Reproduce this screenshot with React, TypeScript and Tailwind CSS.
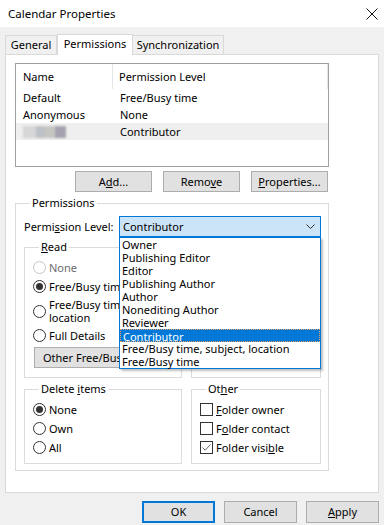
import React from "react";

const Radio = ({ checked, disabled }: { checked?: boolean; disabled?: boolean }) => (
  <span
    className={`flex h-[13px] w-[13px] shrink-0 items-center justify-center rounded-full border bg-white ${
      disabled ? "border-[#c4c4c4]" : "border-[#333333]"
    }`}
  >
    {checked && <span className="h-[7px] w-[7px] rounded-full bg-[#333333]" />}
  </span>
);

const Check = ({ checked }: { checked?: boolean }) => (
  <span className="flex h-[13px] w-[13px] shrink-0 items-center justify-center border border-[#333333] bg-white">
    {checked && (
      <svg width="11" height="11" viewBox="0 0 11 11">
        <path d="M1.5 5.5 L4.2 8.2 L9.5 2.5" stroke="#666" strokeWidth="1" fill="none" />
      </svg>
    )}
  </span>
);

const Btn = ({ children, className = "" }: { children: React.ReactNode; className?: string }) => (
  <div
    className={`flex h-[21px] items-center justify-center border border-[#adadad] bg-[#e1e1e1] ${className}`}
  >
    {children}
  </div>
);

const Legend = ({ children }: { children: React.ReactNode }) => (
  <legend className="ml-[6px] px-[2px] leading-[16px] whitespace-nowrap">{children}</legend>
);

const levels = [
  "Owner",
  "Publishing Editor",
  "Editor",
  "Publishing Author",
  "Author",
  "Nonediting Author",
  "Reviewer",
  "Contributor",
  "Free/Busy time, subject, location",
  "Free/Busy time",
];

const rows = [
  { name: "Default", level: "Free/Busy time" },
  { name: "Anonymous", level: "None" },
  { name: "", level: "Contributor" },
];

export default function App() {
  return (
    <div className="flex h-[525px] w-[384px] flex-col overflow-hidden bg-[#f0f0f0] font-['Noto_Sans',sans-serif] text-[11px] leading-[16px] text-black">
      {/* title bar */}
      <div className="flex h-[27px] shrink-0 items-center justify-between bg-white pl-[8px] pr-[6px]">
        <span className="text-[11.5px]">Calendar Properties</span>
        <svg width="12" height="12" viewBox="0 0 12 12">
          <path d="M0.5 0.5 L11.5 11.5 M11.5 0.5 L0.5 11.5" stroke="#111" strokeWidth="1" />
        </svg>
      </div>

      {/* tabs */}
      <div className="flex h-[27px] items-end pl-[5px]">
        <div className="flex h-[19px] w-[52px] items-center justify-center border border-b-0 border-[#d9d9d9] bg-[#f0f0f0]">
          General
        </div>
        <div className="relative z-10 -mb-px flex h-[21px] w-[76px] items-start justify-center border border-b-0 border-[#d9d9d9] bg-white pt-[1px]">
          Permissions
        </div>
        <div className="flex h-[19px] w-[91px] items-center justify-center border border-b-0 border-l-0 border-[#d9d9d9] bg-[#f0f0f0]">
          Synchronization
        </div>
      </div>

      {/* tab panel */}
      <div className="mx-[5px] h-[439px] shrink-0 border border-[#d9d9d9] bg-white pl-[9px] pt-[8px]">
        {/* list */}
        <div className="h-[104px] w-[314px] border border-[#a0a0a0]">
          <div className="flex h-[25px] items-center">
            <div className="flex h-full w-[97px] items-center border-r border-[#e5e5e5] pl-[7px]">Name</div>
            <div className="flex h-full flex-1 items-center border-r border-[#e5e5e5] pl-[6px]">
              Permission Level
            </div>
          </div>
          {rows.map((r, i) => (
            <div
              key={i}
              className={`flex h-[17px] items-center ${i === 2 ? "bg-[#efefef]" : ""}`}
            >
              <div className="w-[98px] pl-[7px]">
                {r.name ? (
                  r.name
                ) : (
                  <div className="flex h-[12px] items-stretch blur-[1px]">
                    <span className="w-[13px] bg-[#d6d6d6]" />
                    <span className="w-[9px] bg-[#bfc1c8]" />
                    <span className="w-[10px] bg-[#c6c6c0]" />
                    <span className="w-[11px] bg-[#a6a2b0]" />
                  </div>
                )}
              </div>
              <div className="pl-[6px]">{r.level}</div>
            </div>
          ))}
        </div>

        {/* buttons */}
        <div className="mt-[4px] flex w-[313px] justify-end gap-[11px]">
          <Btn className="w-[77px]">
            <span>
              A<u>d</u>d...
            </span>
          </Btn>
          <Btn className="w-[77px]">
            <span>
              Remo<u>v</u>e
            </span>
          </Btn>
          <Btn className="w-[77px]">
            <span>
              <u>P</u>roperties...
            </span>
          </Btn>
        </div>

        {/* permissions group */}
        <fieldset className="mt-[3px] w-[314px] border border-[#dcdcdc] pb-[6px] pl-[8px] pr-[7px]">
          <Legend>Permissions</Legend>

          <div className="mt-[5px] flex h-[21px] items-center">
            <span className="w-[95px] whitespace-nowrap">
              Permi<u>s</u>sion Level:
            </span>
            <div className="relative">
              <div className="flex h-[21px] w-[202px] items-center justify-between border border-[#0078d7] bg-[#cce4f7] pl-[3px] pr-[5px]">
                <span>Contributor</span>
                <svg width="9" height="6" viewBox="0 0 9 6">
                  <path d="M0.5 0.5 L4.5 4.5 L8.5 0.5" stroke="#333" strokeWidth="1" fill="none" />
                </svg>
              </div>
              <div className="absolute left-0 top-full z-20 w-[202px] border border-[#0078d7] bg-white shadow-[2px_2px_2px_rgba(0,0,0,0.25)]">
                {levels.map((l) => (
                  <div
                    key={l}
                    className={`h-[13px] whitespace-nowrap pl-[2px] leading-[13px] ${
                      l === "Contributor"
                        ? "border border-dotted border-[#f0a060] bg-[#0078d7] pl-[1px] leading-[11px] text-white"
                        : ""
                    }`}
                  >
                    {l}
                  </div>
                ))}
              </div>
            </div>
          </div>

          <div className="mt-[2px] grid grid-cols-[158px_130px] gap-x-[9px]">
            <fieldset className="border border-[#dcdcdc] px-[8px] pb-[9px] pt-[3px]">
              <Legend>
                <u>R</u>ead
              </Legend>
              <div className="flex h-[19px] items-center gap-[3px] text-[#6d6d6d]">
                <Radio disabled />
                None
              </div>
              <div className="flex h-[19px] items-center gap-[3px] whitespace-nowrap">
                <Radio checked />
                Free/Busy time
              </div>
              <div className="flex items-center gap-[3px] whitespace-nowrap py-[2px] leading-[13px]">
                <Radio />
                <span>
                  Free/Busy time, subject,
                  <br />
                  location
                </span>
              </div>
              <div className="flex h-[19px] items-center gap-[3px]">
                <Radio />
                Full Details
              </div>
              <Btn className="ml-[1px] mt-[2px] w-[122px] justify-start whitespace-nowrap pl-[8px]">
                Other Free/Busy...
              </Btn>
            </fieldset>
            <fieldset className="border border-[#dcdcdc] px-[8px] pt-[3px]">
              <Legend>
                <u>W</u>rite
              </Legend>
              <div className="flex h-[19px] items-center gap-[3px]">
                <Check checked />
                Create items
              </div>
              <div className="flex h-[19px] items-center gap-[3px]">
                <Check />
                Create subfolders
              </div>
              <div className="flex h-[19px] items-center gap-[3px]">
                <Check />
                Edit own
              </div>
              <div className="flex h-[19px] items-center gap-[3px]">
                <Check />
                Edit all
              </div>
            </fieldset>
          </div>

          <div className="mt-[3px] grid grid-cols-[158px_130px] gap-x-[9px]">
            <fieldset className="border border-[#dcdcdc] px-[8px] pb-[6px] pt-[3px]">
              <Legend>
                Delete <u>i</u>tems
              </Legend>
              <div className="flex h-[19px] items-center gap-[3px]">
                <Radio checked />
                None
              </div>
              <div className="flex h-[19px] items-center gap-[3px]">
                <Radio />
                Own
              </div>
              <div className="flex h-[19px] items-center gap-[3px]">
                <Radio />
                All
              </div>
            </fieldset>
            <fieldset className="border border-[#dcdcdc] px-[8px] pb-[6px] pt-[3px]">
              <Legend>
                Ot<u>h</u>er
              </Legend>
              <div className="flex h-[19px] items-center gap-[3px]">
                <Check />
                <span>
                  <u>F</u>older owner
                </span>
              </div>
              <div className="flex h-[19px] items-center gap-[3px]">
                <Check />
                <span>
                  F<u>o</u>lder contact
                </span>
              </div>
              <div className="flex h-[19px] items-center gap-[3px]">
                <Check checked />
                <span>
                  Folder visi<u>b</u>le
                </span>
              </div>
            </fieldset>
          </div>
        </fieldset>
      </div>

      {/* dialog buttons */}
      <div className="mt-[8px] flex justify-end gap-[9px] pr-[5px]">
        <div className="flex h-[22px] w-[73px] items-center justify-center border-2 border-[#0078d7] bg-[#e1e1e1]">
          OK
        </div>
        <div className="flex h-[22px] w-[73px] items-center justify-center border border-[#adadad] bg-[#e1e1e1]">
          Cancel
        </div>
        <div className="flex h-[22px] w-[73px] items-center justify-center border border-[#adadad] bg-[#e1e1e1]">
          <span>
            <u>A</u>pply
          </span>
        </div>
      </div>
    </div>
  );
}
